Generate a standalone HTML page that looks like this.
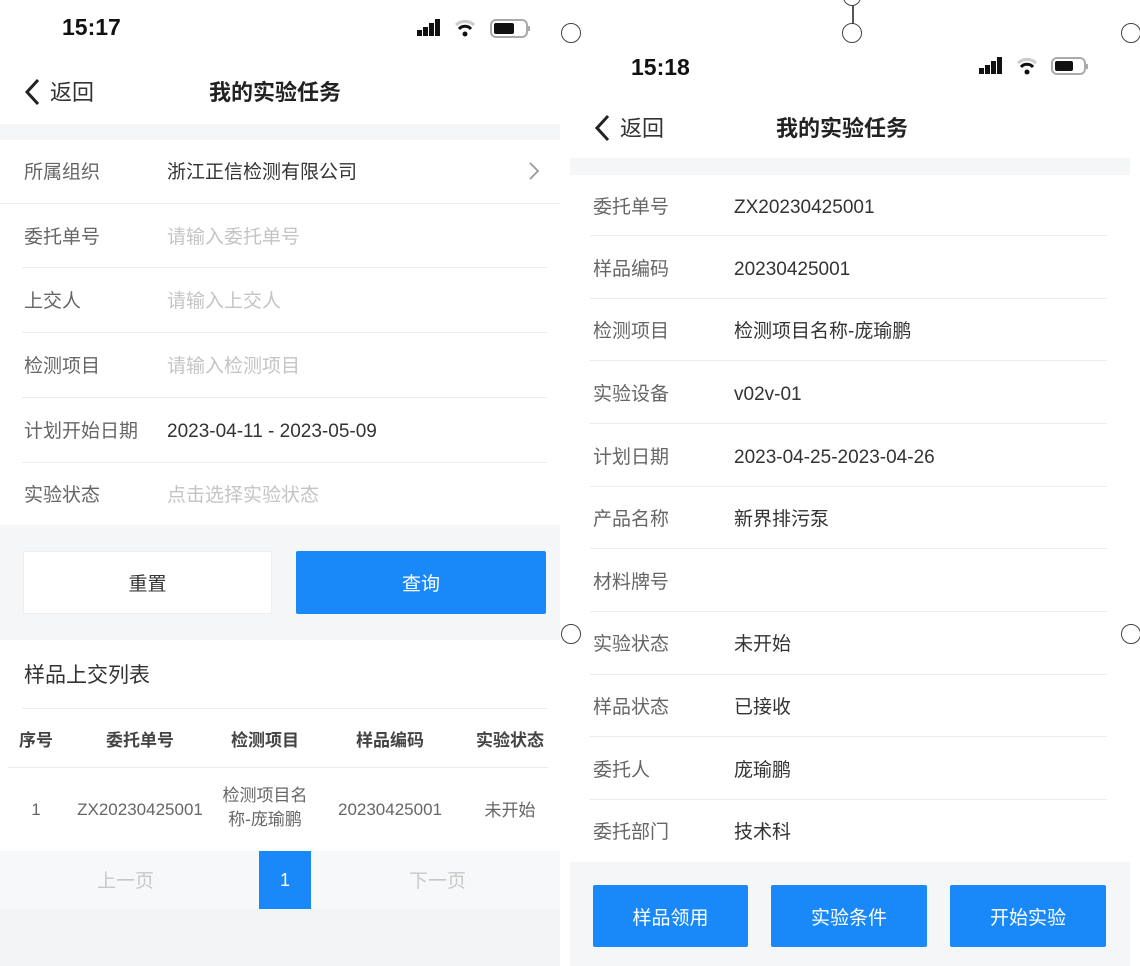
<!DOCTYPE html>
<html><head><meta charset="utf-8"><style>
*{margin:0;padding:0;box-sizing:border-box}
body{width:1140px;height:966px;position:relative;overflow:hidden;background:#fff;font-family:"Liberation Sans","Noto Sans CJK SC",sans-serif;color:#333}
.a{position:absolute;white-space:nowrap}
.lab{font-size:19px;color:#666}
.val{font-size:19px;color:#333}
.ph{font-size:19px;color:#c4c4c4}
.sep{position:absolute;height:1px;background:#ececec}
.bg{position:absolute;background:#f5f6f8}
.btn{position:absolute;background:#1989fa;color:#fff;font-size:19px;display:flex;align-items:center;justify-content:center;border-radius:2px}
.time{font-size:23px;font-weight:bold;color:#111}
.title{font-size:22px;font-weight:bold;color:#222}
.th{font-size:17px;font-weight:bold;color:#444;text-align:center}
.td{font-size:17px;color:#666;text-align:center}
.hd{position:absolute;width:20px;height:20px;border:1.5px solid #444;border-radius:50%;background:#fff}
</style></head><body>
<!-- LEFT -->
<div class="a time" style="left:62px;top:14px">15:17</div>
<svg class="a" style="left:415px;top:18px" width="120" height="22" viewBox="0 0 120 22">
<rect x="2" y="12" width="5" height="6" fill="#111"/><rect x="8" y="9" width="5" height="9" fill="#111"/><rect x="14" y="5" width="5" height="13" fill="#111"/><rect x="20" y="1" width="5" height="17" fill="#111"/>
<path d="M41 7a13 13 0 0 1 18 0" stroke="#ccc" stroke-width="3" fill="none"/><path d="M44 11a8 8 0 0 1 12 0" stroke="#111" stroke-width="3" fill="none"/><circle cx="50" cy="16" r="2.5" fill="#111"/>
<rect x="76" y="2" width="36" height="17" rx="5" fill="none" stroke="#aaa" stroke-width="2"/><rect x="79" y="5" width="20" height="11" rx="2" fill="#111"/><rect x="113" y="8" width="2" height="5" fill="#aaa"/>
</svg>
<svg class="a" style="left:22px;top:77px" width="20" height="30"><path d="M16 3 L5 15 L16 27" stroke="#222" stroke-width="3" fill="none"/></svg>
<div class="a" style="left:50px;top:75px;font-size:22px;color:#333">返回</div>
<div class="a title" style="left:209px;top:75px">我的实验任务</div>
<div class="bg" style="left:0;top:124px;width:560px;height:16px"></div>
<div class="a lab" style="left:24px;top:157px">所属组织</div><div class="a val" style="left:167px;top:157px">浙江正信检测有限公司</div>
<svg class="a" style="left:527px;top:161px" width="14" height="20"><path d="M3 2 L11 10 L3 18" stroke="#999" stroke-width="1.8" fill="none"/></svg>
<div class="sep" style="left:0;top:203px;width:560px"></div>
<div class="a lab" style="left:24px;top:222px">委托单号</div><div class="a ph" style="left:167px;top:222px">请输入委托单号</div>
<div class="sep" style="left:22px;top:267px;width:525px"></div>
<div class="a lab" style="left:24px;top:286px">上交人</div><div class="a ph" style="left:167px;top:286px">请输入上交人</div>
<div class="sep" style="left:22px;top:332px;width:525px"></div>
<div class="a lab" style="left:24px;top:351px">检测项目</div><div class="a ph" style="left:167px;top:351px">请输入检测项目</div>
<div class="sep" style="left:22px;top:397px;width:525px"></div>
<div class="a lab" style="left:24px;top:416px">计划开始日期</div><div class="a val" style="left:167px;top:421px">2023-04-11 - 2023-05-09</div>
<div class="sep" style="left:22px;top:462px;width:525px"></div>
<div class="a lab" style="left:24px;top:480px">实验状态</div><div class="a ph" style="left:167px;top:480px">点击选择实验状态</div>
<div class="bg" style="left:0;top:525px;width:560px;height:115px"></div>
<div class="a" style="left:23px;top:551px;width:249px;height:63px;background:#fff;border:1px solid #eee;display:flex;align-items:center;justify-content:center;font-size:19px;color:#333">重置</div>
<div class="btn" style="left:296px;top:551px;width:250px;height:63px">查询</div>
<div class="a" style="left:24px;top:659px;font-size:21px;color:#333">样品上交列表</div>
<div class="sep" style="left:22px;top:708px;width:525px"></div>
<div class="a th" style="left:10px;top:726px;width:52px">序号</div>
<div class="a th" style="left:80px;top:726px;width:120px">委托单号</div>
<div class="a th" style="left:205px;top:726px;width:120px">检测项目</div>
<div class="a th" style="left:330px;top:726px;width:120px">样品编码</div>
<div class="a th" style="left:465px;top:726px;width:90px">实验状态</div>
<div class="sep" style="left:8px;top:767px;width:540px"></div>
<div class="a td" style="left:10px;top:800px;width:52px">1</div>
<div class="a td" style="left:70px;top:800px;width:140px">ZX20230425001</div>
<div class="a td" style="left:205px;top:784px;width:120px;line-height:24px;white-space:normal">检测项目名<br>称-庞瑜鹏</div>
<div class="a td" style="left:330px;top:800px;width:120px">20230425001</div>
<div class="a td" style="left:465px;top:796px;width:90px">未开始</div>
<div class="bg" style="left:0;top:851px;width:560px;height:58px;background:#f7f8fa"></div>
<div class="bg" style="left:0;top:909px;width:560px;height:57px;background:#f3f4f6"></div>
<div class="a" style="left:97px;top:866px;font-size:19px;color:#c8c8c8">上一页</div>
<div class="a" style="left:409px;top:866px;font-size:19px;color:#c8c8c8">下一页</div>
<div class="btn" style="left:259px;top:851px;width:52px;height:58px;border-radius:0;font-size:18px">1</div>
<!-- RIGHT -->
<div class="a" style="left:852px;top:0;width:1.5px;height:24px;background:#555"></div>
<div class="hd" style="left:843px;top:-12px;width:18px;height:18px"></div>
<div class="hd" style="left:561px;top:23px"></div>
<div class="hd" style="left:842px;top:23px"></div>
<div class="hd" style="left:1121px;top:23px"></div>
<div class="a time" style="left:631px;top:54px">15:18</div>
<svg class="a" style="left:977px;top:56px" width="120" height="22" viewBox="0 0 120 22">
<rect x="2" y="12" width="5" height="6" fill="#111"/><rect x="8" y="9" width="5" height="9" fill="#111"/><rect x="14" y="5" width="5" height="13" fill="#111"/><rect x="20" y="1" width="5" height="17" fill="#111"/>
<path d="M41 7a13 13 0 0 1 18 0" stroke="#ccc" stroke-width="3" fill="none"/><path d="M44 11a8 8 0 0 1 12 0" stroke="#111" stroke-width="3" fill="none"/><circle cx="50" cy="16" r="2.5" fill="#111"/>
<rect x="75" y="2" width="33" height="16" rx="5" fill="none" stroke="#aaa" stroke-width="2"/><rect x="78" y="5" width="18" height="10" rx="2" fill="#111"/><rect x="109" y="8" width="2" height="5" fill="#aaa"/>
</svg>
<svg class="a" style="left:592px;top:113px" width="20" height="30"><path d="M16 3 L5 15 L16 27" stroke="#222" stroke-width="3" fill="none"/></svg>
<div class="a" style="left:620px;top:111px;font-size:22px;color:#333">返回</div>
<div class="a title" style="left:776px;top:111px">我的实验任务</div>
<div class="bg" style="left:570px;top:158px;width:560px;height:17px"></div>
<div class="a lab" style="left:593px;top:192px">委托单号</div><div class="a val" style="left:734px;top:197px">ZX20230425001</div>
<div class="sep" style="left:590px;top:235px;width:517px"></div>
<div class="a lab" style="left:593px;top:254px">样品编码</div><div class="a val" style="left:734px;top:259px">20230425001</div>
<div class="sep" style="left:590px;top:298px;width:517px"></div>
<div class="a lab" style="left:593px;top:316px">检测项目</div><div class="a val" style="left:734px;top:316px">检测项目名称-庞瑜鹏</div>
<div class="sep" style="left:590px;top:360px;width:517px"></div>
<div class="a lab" style="left:593px;top:379px">实验设备</div><div class="a val" style="left:734px;top:384px">v02v-01</div>
<div class="sep" style="left:590px;top:423px;width:517px"></div>
<div class="a lab" style="left:593px;top:442px">计划日期</div><div class="a val" style="left:734px;top:447px">2023-04-25-2023-04-26</div>
<div class="sep" style="left:590px;top:486px;width:517px"></div>
<div class="a lab" style="left:593px;top:504px">产品名称</div><div class="a val" style="left:734px;top:504px">新界排污泵</div>
<div class="sep" style="left:590px;top:548px;width:517px"></div>
<div class="a lab" style="left:593px;top:567px">材料牌号</div>
<div class="sep" style="left:590px;top:611px;width:517px"></div>
<div class="hd" style="left:561px;top:624px"></div>
<div class="hd" style="left:1121px;top:624px"></div>
<div class="a lab" style="left:593px;top:629px">实验状态</div><div class="a val" style="left:734px;top:629px">未开始</div>
<div class="sep" style="left:590px;top:674px;width:517px"></div>
<div class="a lab" style="left:593px;top:692px">样品状态</div><div class="a val" style="left:734px;top:692px">已接收</div>
<div class="sep" style="left:590px;top:736px;width:517px"></div>
<div class="a lab" style="left:593px;top:755px">委托人</div><div class="a val" style="left:734px;top:755px">庞瑜鹏</div>
<div class="sep" style="left:590px;top:799px;width:517px"></div>
<div class="a lab" style="left:593px;top:817px">委托部门</div><div class="a val" style="left:734px;top:817px">技术科</div>
<div class="bg" style="left:570px;top:862px;width:560px;height:104px"></div>
<div class="btn" style="left:593px;top:885px;width:155px;height:62px">样品领用</div>
<div class="btn" style="left:771px;top:885px;width:156px;height:62px">实验条件</div>
<div class="btn" style="left:950px;top:885px;width:156px;height:62px">开始实验</div>
</body></html>
